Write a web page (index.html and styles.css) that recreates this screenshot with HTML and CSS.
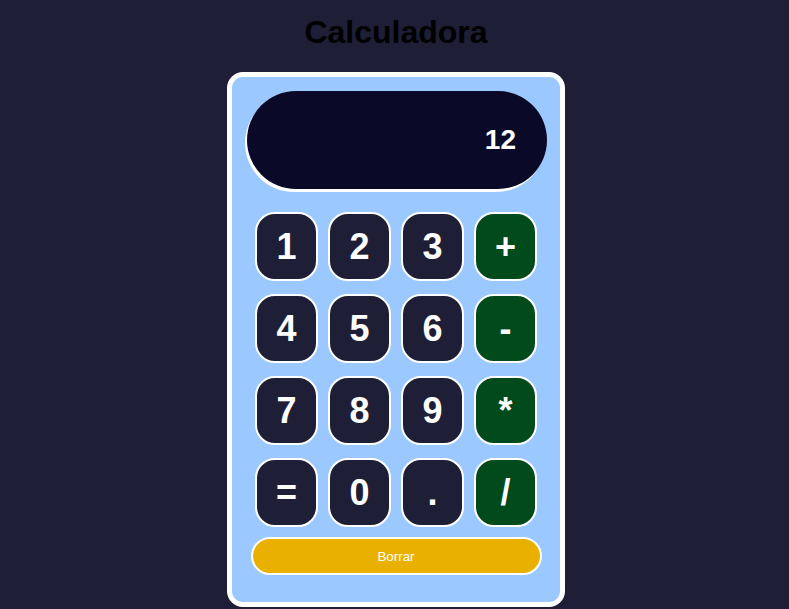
FILE: index.html
```html
<!DOCTYPE html>
<html lang="es">
<head>
<meta charset="utf-8">
<title>Calculadora</title>
<link rel="stylesheet" href="styles.css">
</head>
<body>
<h1 class="title">Calculadora</h1>
<div class="calc">
  <div class="display">12</div>
  <div class="keys">
    <button class="key">1</button>
    <button class="key">2</button>
    <button class="key">3</button>
    <button class="key op">+</button>
    <button class="key">4</button>
    <button class="key">5</button>
    <button class="key">6</button>
    <button class="key op">-</button>
    <button class="key">7</button>
    <button class="key">8</button>
    <button class="key">9</button>
    <button class="key op">*</button>
    <button class="key">=</button>
    <button class="key">0</button>
    <button class="key">.</button>
    <button class="key op">/</button>
  </div>
  <button class="clear">Borrar</button>
</div>
</body>
</html>
```

FILE: styles.css
```css
html, body {
  margin: 0;
  padding: 0;
}
body {
  background: #1e1e36;
  font-family: "Liberation Sans", Arial, sans-serif;
  padding-left: 3px;
}
.title {
  margin: 14px 0 21px;
  font-size: 32px;
  line-height: 37px;
  font-weight: bold;
  color: #000;
  text-align: center;
}
.calc {
  width: 328px;
  margin: 0 auto;
  border: 5px solid #fff;
  border-radius: 16px;
  background: #9bc9ff;
  padding: 14px 0 27px;
  display: flex;
  flex-direction: column;
  align-items: center;
}
.display {
  box-sizing: border-box;
  width: 300px;
  height: 98px;
  margin-left: 2px;
  border-radius: 50px;
  background: #0a0a28;
  box-shadow: -2px 3px 0 #fff;
  color: #fff;
  font-weight: bold;
  font-size: 28px;
  display: flex;
  align-items: center;
  justify-content: flex-end;
  padding-right: 31px;
}
.keys {
  margin-top: 23px;
  display: grid;
  grid-template-columns: repeat(4, 63px);
  grid-auto-rows: 69px;
  column-gap: 10px;
  row-gap: 13px;
}
.key {
  box-sizing: border-box;
  border: 2px solid #fff;
  border-radius: 20px;
  background: #1e1e36;
  color: #fff;
  font-family: "Liberation Sans", Arial, sans-serif;
  font-weight: bold;
  font-size: 36px;
  padding: 0;
  display: flex;
  align-items: center;
  justify-content: center;
}
.key.op {
  background: #004a1c;
}
.clear {
  box-sizing: border-box;
  margin-top: 10px;
  width: 291px;
  height: 38px;
  border: 2px solid #fff;
  border-radius: 19px;
  background: #eab000;
  color: #fff;
  font-family: "Liberation Sans", Arial, sans-serif;
  font-size: 13.33px;
  padding: 0;
}
```
